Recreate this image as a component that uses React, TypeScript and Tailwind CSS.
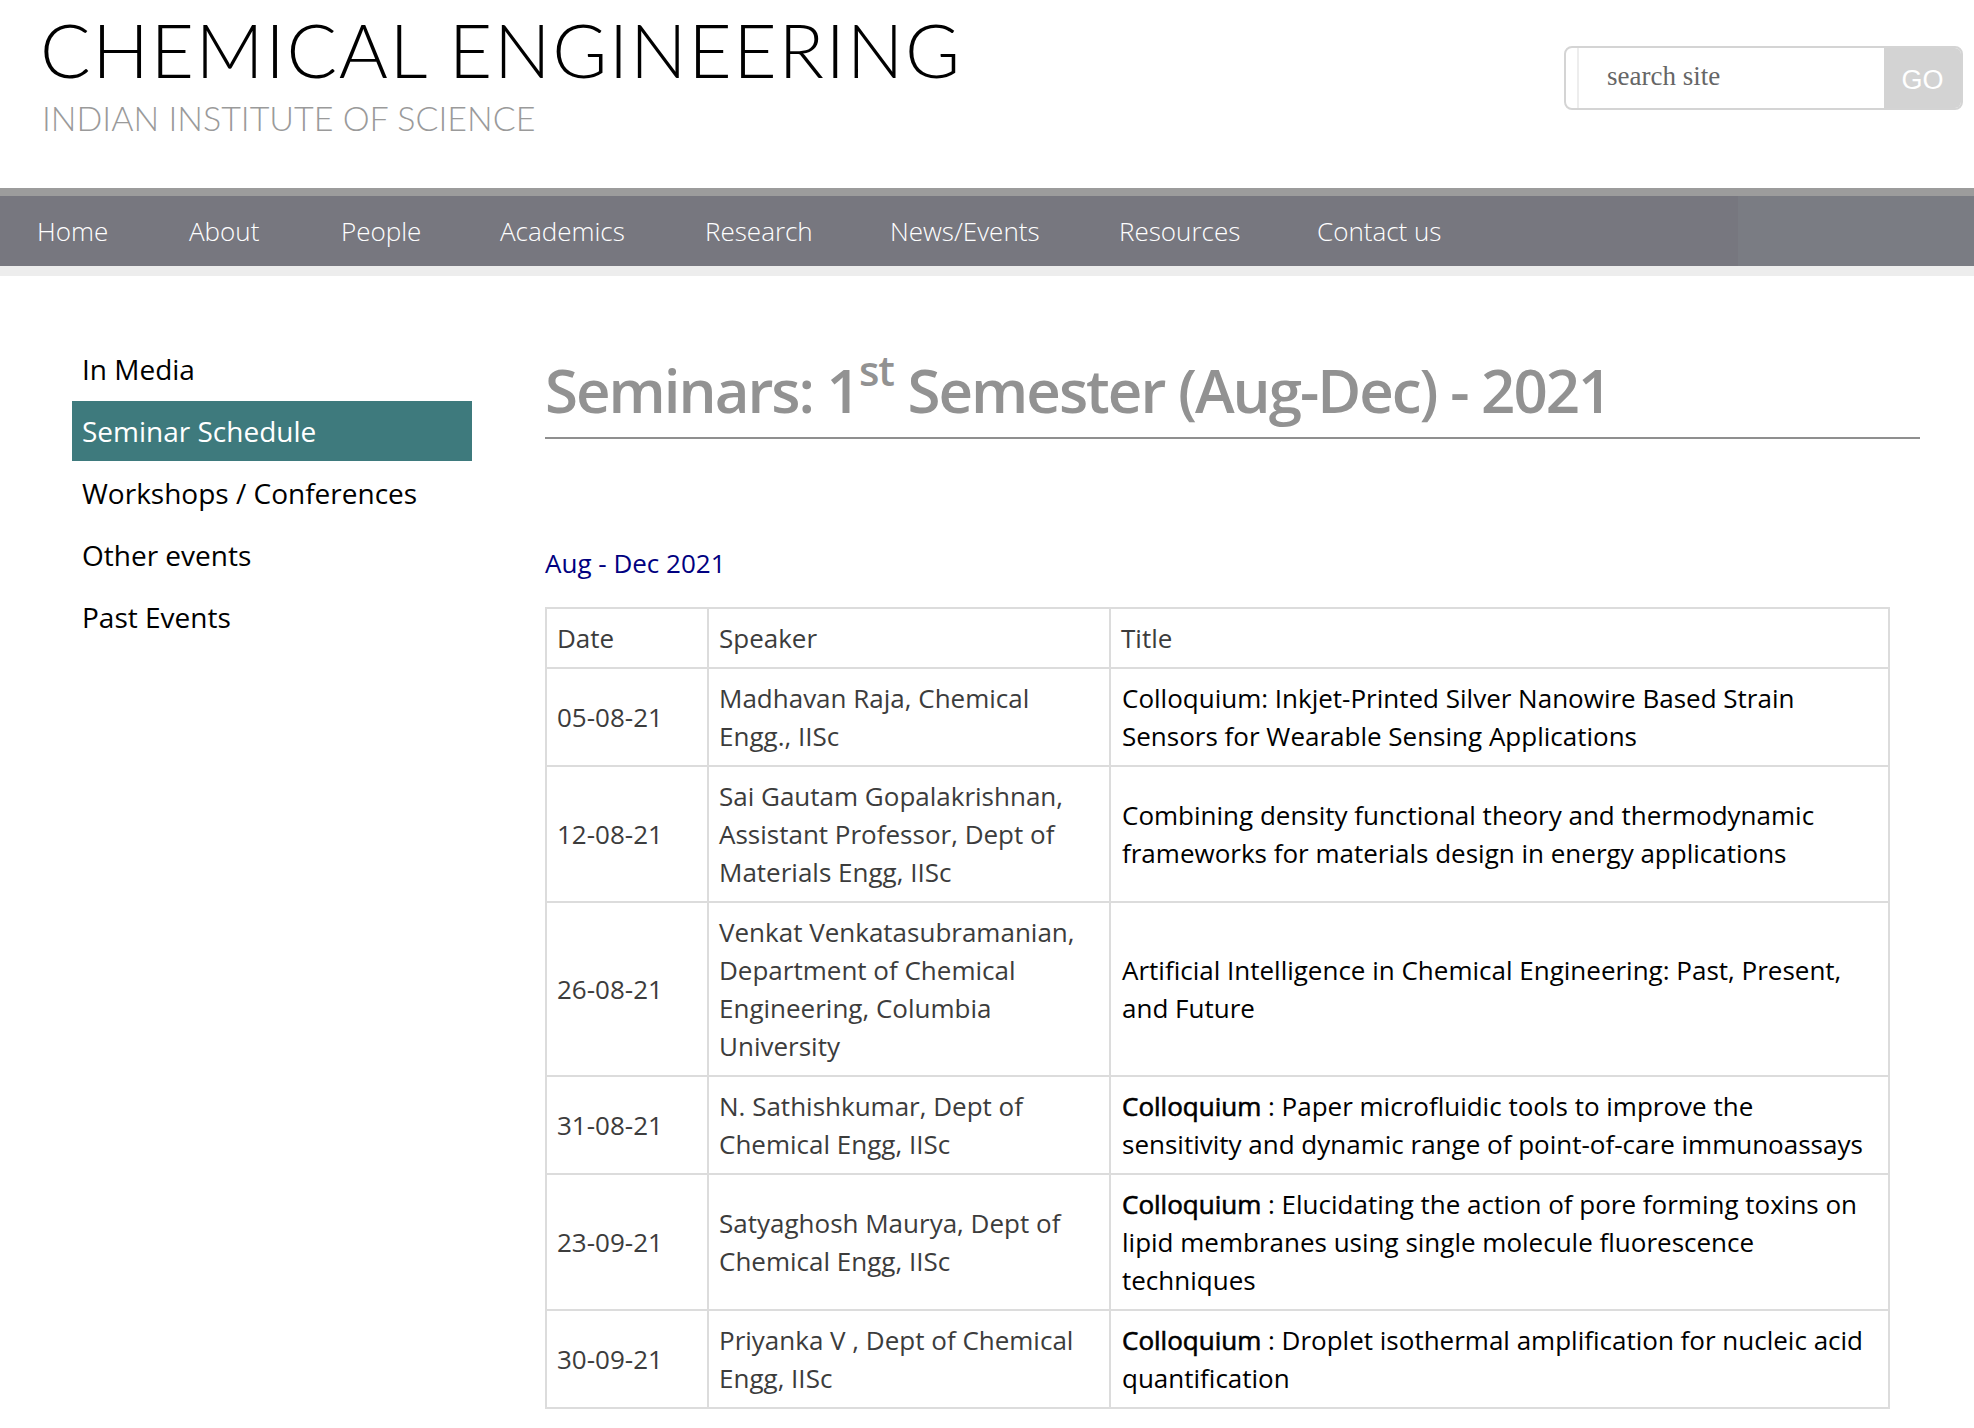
import React from 'react';

type Row = {
  date: string;
  speaker: string[];
  title: string[];
  lead?: string;
};

const navItems = [
  { label: 'Home', w: 'w-[152px]' },
  { label: 'About', w: 'w-[152px]' },
  { label: 'People', w: 'w-[159px]' },
  { label: 'Academics', w: 'w-[205px]' },
  { label: 'Research', w: 'w-[185px]' },
  { label: 'News/Events', w: 'w-[229px]' },
  { label: 'Resources', w: 'w-[198px]' },
  { label: 'Contact us', w: 'w-[180px]' },
];

const sideItems = ['In Media', 'Seminar Schedule', 'Workshops / Conferences', 'Other events', 'Past Events'];

const rows: Row[] = [
  {
    date: '05-08-21',
    speaker: ['Madhavan Raja, Chemical', 'Engg., IISc'],
    title: ['Colloquium: Inkjet-Printed Silver Nanowire Based Strain', 'Sensors for Wearable Sensing Applications'],
  },
  {
    date: '12-08-21',
    speaker: ['Sai Gautam Gopalakrishnan,', 'Assistant Professor, Dept of', 'Materials Engg, IISc'],
    title: ['Combining density functional theory and thermodynamic', 'frameworks for materials design in energy applications'],
  },
  {
    date: '26-08-21',
    speaker: ['Venkat Venkatasubramanian,', 'Department of Chemical', 'Engineering, Columbia', 'University'],
    title: ['Artificial Intelligence in Chemical Engineering: Past, Present,', 'and Future'],
  },
  {
    date: '31-08-21',
    speaker: ['N. Sathishkumar, Dept of', 'Chemical Engg, IISc'],
    lead: 'Colloquium',
    title: [' : Paper microfluidic tools to improve the', 'sensitivity and dynamic range of point-of-care immunoassays'],
  },
  {
    date: '23-09-21',
    speaker: ['Satyaghosh Maurya, Dept of', 'Chemical Engg, IISc'],
    lead: 'Colloquium',
    title: [' : Elucidating the action of pore forming toxins on', 'lipid membranes using single molecule fluorescence', 'techniques'],
  },
  {
    date: '30-09-21',
    speaker: ['Priyanka V , Dept of Chemical', 'Engg, IISc'],
    lead: 'Colloquium',
    title: [' : Droplet isothermal amplification for nucleic acid', 'quantification'],
  },
];

function Header() {
  return (
    <header className="flex h-[188px] justify-between">
      {/* Logo text */}
      <div className="pl-[40px] pt-[12px] font-['Lato',sans-serif] font-light">
        <div className="text-[75px] leading-none tracking-[1.6px] text-black">CHEMICAL ENGINEERING</div>
        <div className="ml-[2px] mt-[14px] text-[34px] leading-none text-[#9a9a9a]">INDIAN INSTITUTE OF SCIENCE</div>
      </div>

      {/* Search */}
      <div className="mr-[11px] mt-[46px] flex h-[64px] w-[399px] overflow-hidden rounded-[8px] border-2 border-[#d4d4d4] bg-white">
        <div className="ml-[11px] flex flex-1 items-center border-l-2 border-[#ededed] pb-[4px] pl-[28px]">
          <span className="font-['Liberation_Serif',serif] text-[27px] text-[#666]">search site</span>
        </div>
        <div className="flex w-[77px] items-center justify-center bg-[#d3d3d3] pt-[4px] font-['Liberation_Sans',Arial,sans-serif] text-[27px] text-white">
          GO
        </div>
      </div>
    </header>
  );
}

function NavBar() {
  return (
    <nav>
      <div className="flex h-[78px] border-t-8 border-[#9c9c9c] bg-[#77777f]">
        <ul className="flex flex-1 items-center pl-[37px] text-[26px] font-light text-white">
          {navItems.map((item) => (
            <li key={item.label} className={item.w}>
              {item.label}
            </li>
          ))}
        </ul>
        <div className="w-[236px] bg-[#7a7c83]" />
      </div>
      <div className="h-[10px] bg-[#ededed]" />
    </nav>
  );
}

export default function App() {
  return (
    <div className="min-h-screen w-full bg-white font-['Open_Sans',sans-serif]">
      <Header />
      <NavBar />

      <div className="flex pt-[63px]">
        {/* Sidebar */}
        <aside className="ml-[72px] flex w-[400px] shrink-0 flex-col gap-[2px]">
          {sideItems.map((label) => (
            <div
              key={label}
              className={`flex h-[60px] items-center px-[10px] text-[28px] ${
                label === 'Seminar Schedule' ? 'bg-[#3e7a7d] text-white' : 'text-black'
              }`}
            >
              {label}
            </div>
          ))}
        </aside>

        {/* Content */}
        <main className="ml-[73px] w-[1375px]">
          <h1 className="mt-[16px] border-b-2 border-[#8f8f8f] pb-[12px] text-[60px] font-semibold leading-[70px] tracking-[-2px] text-[#929292]">
            Seminars: 1<sup className="-top-[27px] text-[42px] tracking-[-1px]">st</sup> Semester (Aug-Dec) - 2021
          </h1>

          <p className="mt-[106px] text-[26px] leading-[36px] text-[#000080]">Aug - Dec 2021</p>

          <table className="mt-[26px] w-[1345px] table-fixed border-collapse border-2 border-[#dcdcdc] text-[26px] leading-[38px]">
            <colgroup>
              <col className="w-[162px]" />
              <col className="w-[402px]" />
              <col />
            </colgroup>
            <thead>
              <tr>
                {['Date', 'Speaker', 'Title'].map((h) => (
                  <th key={h} className="border-2 border-[#dcdcdc] px-[10px] py-[10px] text-left font-normal text-[#3c3c3c]">
                    {h}
                  </th>
                ))}
              </tr>
            </thead>
            <tbody>
              {rows.map((row) => (
                <tr key={row.date}>
                  <td className="border-2 border-[#dcdcdc] px-[10px] py-[10px] text-[#3c3c3c]">{row.date}</td>
                  <td className="border-2 border-[#dcdcdc] px-[10px] py-[10px] text-[#3c3c3c]">
                    {row.speaker.map((line) => (
                      <div key={line} className="whitespace-nowrap">
                        {line}
                      </div>
                    ))}
                  </td>
                  <td className="border-2 border-[#dcdcdc] px-[11px] py-[10px] text-black">
                    {row.title.map((line, i) => (
                      <div key={line} className="whitespace-pre">
                        {i === 0 && row.lead && (
                          <strong className="font-normal [-webkit-text-stroke:0.6px_#000]">{row.lead}</strong>
                        )}
                        {line}
                      </div>
                    ))}
                  </td>
                </tr>
              ))}
            </tbody>
          </table>
        </main>
      </div>
    </div>
  );
}
